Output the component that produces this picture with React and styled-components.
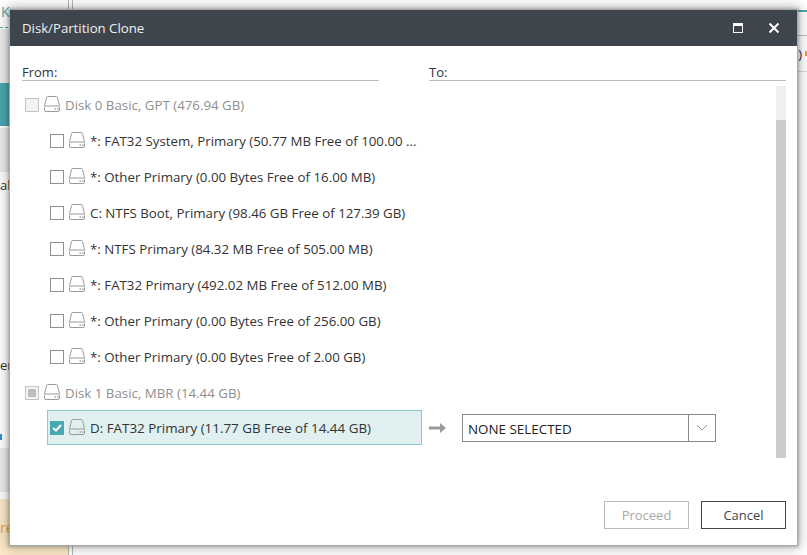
import React from "react";
import styled, { createGlobalStyle } from "styled-components";

const font = `"Open Sans", "Noto Sans", sans-serif`;

const partitions0 = [
  "*: FAT32 System, Primary (50.77 MB Free of 100.00 ...",
  "*: Other Primary (0.00 Bytes Free of 16.00 MB)",
  "C: NTFS Boot, Primary (98.46 GB Free of 127.39 GB)",
  "*: NTFS Primary (84.32 MB Free of 505.00 MB)",
  "*: FAT32 Primary (492.02 MB Free of 512.00 MB)",
  "*: Other Primary (0.00 Bytes Free of 256.00 GB)",
  "*: Other Primary (0.00 Bytes Free of 2.00 GB)",
];

const GlobalStyle = createGlobalStyle`
  html, body {
    margin: 0;
    padding: 0;
    background: #fff;
    overflow: hidden;
  }
`;

const Page = styled.div`
  position: relative;
  width: 807px;
  height: 555px;
  overflow: hidden;
  background: #fff;
  font-family: ${font};
`;

const Backdrop = styled.div`
  display: flex;
  height: 100%;
`;

const Sidebar = styled.div`
  width: 68px;
  height: 100%;
  flex: none;
  display: flex;
  flex-direction: column;
  border-right: 1px solid #b5b5b5;
  font-size: 13px;
`;

const SideLogo = styled.div`
  height: 28px;
  flex: none;
  box-sizing: border-box;
  border-bottom: 1px dashed #4aa9b0;
  color: #4aa9b0;
  font-size: 14px;
  line-height: 24px;
  padding-left: 1px;
`;

const SideGrey = styled.div`
  height: ${(p) => p.$h}px;
  flex: none;
  background: #ececec;
  margin-top: ${(p) => p.$top || 0}px;
`;

const SideTeal = styled.div`
  height: 43px;
  flex: none;
  background: #4aa9b0;
`;

const SideText = styled.div`
  height: ${(p) => p.$h}px;
  flex: none;
  color: #333;
  display: flex;
  align-items: flex-end;
  line-height: 18px;
`;

const SideTick = styled.div`
  width: 2px;
  height: 6px;
  flex: none;
  margin-top: 60px;
  background: #2f8fd8;
`;

const SideNote = styled.div`
  flex: 1;
  margin-top: 7px;
  background: #fbe9c8;
  color: #e8a13a;
  font-size: 14px;
  line-height: 30px;
  padding-top: 14px;
`;

const Gutter = styled.div`
  width: 3px;
  flex: none;
  border-right: 1px solid #b5b5b5;
`;

const Main = styled.div`
  flex: 1;
  display: flex;
  flex-direction: column;
  align-items: stretch;
`;

const TopLine = styled.div`
  height: ${(p) => p.$h}px;
  border-bottom: ${(p) => p.$w || 1}px solid ${(p) => p.$c};
  flex: none;
  box-sizing: content-box;
  color: #333;
  font-size: 13px;
  line-height: 18px;
`;

const TopText = styled(TopLine)`
  display: flex;
  align-items: center;
  justify-content: flex-end;
  gap: 3px;
`;

const OrangeMark = styled.span`
  width: 2px;
  height: 5px;
  background: #e8a13a;
`;

const Dialog = styled.div`
  position: absolute;
  left: 10px;
  top: 10px;
  width: 787px;
  height: 535px;
  display: flex;
  flex-direction: column;
  background: #fff;
  box-shadow: 0 0 0 1px #a8a8a8, 0 0 3px 2px rgba(0, 0, 0, 0.22),
    0 0 12px 3px rgba(0, 0, 0, 0.26);
`;

const TitleBar = styled.div`
  height: 36px;
  flex: none;
  display: flex;
  align-items: center;
  padding: 0 18px 0 12px;
  background: #3e454d;
  color: #f2f2f2;
  font-size: 13.2px;
`;

const Title = styled.div`
  flex: 1;
`;

const TitleIcons = styled.div`
  display: flex;
  align-items: center;
  gap: 26px;
`;

const Body = styled.div`
  flex: 1;
  display: flex;
  flex-direction: column;
  padding: 0 11px 16px 12px;
  min-height: 0;
`;

const Heads = styled.div`
  display: grid;
  grid-template-columns: 357px 357px;
  column-gap: 50px;
  padding-top: 16px;
  flex: none;
`;

const Head = styled.div`
  height: 19px;
  box-sizing: border-box;
  border-bottom: 1px solid #bdbdbd;
  font-size: 13px;
  line-height: 21px;
  color: #333;
`;

const ListArea = styled.div`
  display: flex;
  height: 372px;
  margin-top: 5px;
  flex: none;
`;

const List = styled.div`
  flex: 1;
  min-width: 0;
  display: flex;
  flex-direction: column;
  padding-top: 1px;
`;

const Scrollbar = styled.div`
  width: 10px;
  flex: none;
  background: #efefef;
  padding-top: 34px;
  box-sizing: border-box;
`;

const ScrollThumb = styled.div`
  height: 100%;
  background: #cccccc;
`;

const Row = styled.div`
  height: 36px;
  flex: none;
  display: flex;
  align-items: center;
  padding-left: ${(p) => (p.$disk ? 3 : 28)}px;
  font-size: 13.3px;
  color: ${(p) => (p.$disk ? "#8f8f8f" : "#333")};
  white-space: nowrap;
`;

const RowLabel = styled.span`
  margin-left: 5px;
`;

const SelectedRow = styled.div`
  width: 375px;
  height: 35px;
  flex: none;
  box-sizing: border-box;
  display: flex;
  align-items: center;
  margin-left: 25px;
  padding: 1px 0 0 2px;
  background: #e0f0f0;
  border: 1px solid #8ec9cc;
  font-size: 13.4px;
  color: #333;
  white-space: nowrap;
`;

const TargetRow = styled.div`
  display: flex;
  align-items: center;
  margin-top: -1px;
`;

const Arrow = styled.div`
  width: 40px;
  flex: none;
  display: flex;
  padding-left: 7px;
  box-sizing: border-box;
`;

const Select = styled.div`
  width: 254px;
  height: 28px;
  box-sizing: border-box;
  display: flex;
  align-items: stretch;
  border: 1px solid #8a8a8a;
  font-size: 13.4px;
  color: #222;
`;

const SelectValue = styled.div`
  flex: 1;
  line-height: 28px;
  padding-left: 5px;
`;

const SelectButton = styled.div`
  width: 26px;
  border-left: 1px solid #8a8a8a;
  display: flex;
  align-items: center;
  justify-content: center;
`;

const Check = styled.span`
  width: 14px;
  height: 14px;
  flex: none;
  box-sizing: border-box;
  display: flex;
  align-items: center;
  justify-content: center;
  border: 1px solid ${(p) => (p.$checked ? "#4aa9b0" : p.$muted ? "#c4c4c4" : "#8f8f8f")};
  background: ${(p) => (p.$checked ? "#4aa9b0" : p.$muted ? "#f3f3f3" : "#fff")};
  margin-right: 5px;
`;

const Mixed = styled.span`
  width: 8px;
  height: 8px;
  background: #bdbdbd;
`;

const Footer = styled.div`
  margin-top: auto;
  display: flex;
  justify-content: flex-end;
  gap: 12px;
`;

const Button = styled.div`
  width: 85px;
  height: 28px;
  box-sizing: border-box;
  display: flex;
  align-items: center;
  justify-content: center;
  font-size: 13px;
  border: 1px solid ${(p) => (p.$disabled ? "#bcbcbc" : "#3e454d")};
  color: ${(p) => (p.$disabled ? "#a8a8a8" : "#3e454d")};
`;

const DiskSvg = styled.svg`
  flex: none;
  margin-top: -2px;
`;

const DiskIcon = () => (
  <DiskSvg width="16" height="16" viewBox="0 0 16 16" fill="none" stroke="#9b9b9b" strokeWidth="1">
    <path d="M0.5 10 L2.5 1.5 Q2.7 0.5 3.7 0.5 H12.3 Q13.3 0.5 13.5 1.5 L15.5 10" />
    <rect x="0.5" y="10" width="15" height="5.5" rx="1.5" />
    <path d="M10.5 13h1.5M13 13h1.5" stroke="#7a7a7a" />
  </DiskSvg>
);

export default function App() {
  return (
    <Page>
      <GlobalStyle />
      <Backdrop>
        <Sidebar>
          <SideLogo>K</SideLogo>
          <SideGrey $h={54} $top={1} />
          <SideTeal />
          <SideGrey $h={44} $top={2} />
          <SideText $h={22}>al</SideText>
          <SideText $h={180}>er</SideText>
          <SideTick />
          <SideGrey $h={44} $top={8} />
          <SideNote>re</SideNote>
        </Sidebar>
        <Gutter />
        <Main>
          <TopLine $h={10} $w={2} $c="#4aa9b0" />
          <TopLine $h={23} $c="#bdbdbd" />
          <TopText $h={35} $c="#dcdcdc">
            )<OrangeMark />
          </TopText>
        </Main>
      </Backdrop>
      <Dialog>
        <TitleBar>
          <Title>Disk/Partition Clone</Title>
          <TitleIcons>
            <svg width="10" height="10" viewBox="0 0 10 10">
              <rect x="0" y="0" width="10" height="10" fill="#fff" />
              <rect x="1" y="3" width="8" height="6" fill="#3e454d" />
            </svg>
            <svg width="10" height="10" viewBox="0 0 10 10" stroke="#fff" strokeWidth="2">
              <path d="M0.5 0.5 L9.5 9.5 M9.5 0.5 L0.5 9.5" />
            </svg>
          </TitleIcons>
        </TitleBar>
        <Body>
          <Heads>
            <Head>From:</Head>
            <Head>To:</Head>
          </Heads>
          <ListArea>
            <List>
              <Row $disk>
                <Check $muted />
                <DiskIcon />
                <RowLabel>Disk 0 Basic, GPT (476.94 GB)</RowLabel>
              </Row>
              {partitions0.map((p) => (
                <Row key={p}>
                  <Check />
                  <DiskIcon />
                  <RowLabel>{p}</RowLabel>
                </Row>
              ))}
              <Row $disk>
                <Check $muted>
                  <Mixed />
                </Check>
                <DiskIcon />
                <RowLabel>Disk 1 Basic, MBR (14.44 GB)</RowLabel>
              </Row>
              <TargetRow>
                <SelectedRow>
                  <Check $checked>
                    <svg width="10" height="8" viewBox="0 0 10 8" fill="none" stroke="#fff" strokeWidth="2">
                      <path d="M1 4 L4 6.5 L9 1" />
                    </svg>
                  </Check>
                  <DiskIcon />
                  <RowLabel>D: FAT32 Primary (11.77 GB Free of 14.44 GB)</RowLabel>
                </SelectedRow>
                <Arrow>
                  <svg width="17" height="10" viewBox="0 0 17 10" fill="#9a9a9a">
                    <path d="M0 3.5 H11 V0 L17 5 L11 10 V6.5 H0 Z" />
                  </svg>
                </Arrow>
                <Select>
                  <SelectValue>NONE SELECTED</SelectValue>
                  <SelectButton>
                    <svg width="12" height="7" viewBox="0 0 12 7" fill="none" stroke="#9a9a9a">
                      <path d="M1 1 L6 6 L11 1" />
                    </svg>
                  </SelectButton>
                </Select>
              </TargetRow>
            </List>
            <Scrollbar>
              <ScrollThumb />
            </Scrollbar>
          </ListArea>
          <Footer>
            <Button $disabled>Proceed</Button>
            <Button>Cancel</Button>
          </Footer>
        </Body>
      </Dialog>
    </Page>
  );
}
